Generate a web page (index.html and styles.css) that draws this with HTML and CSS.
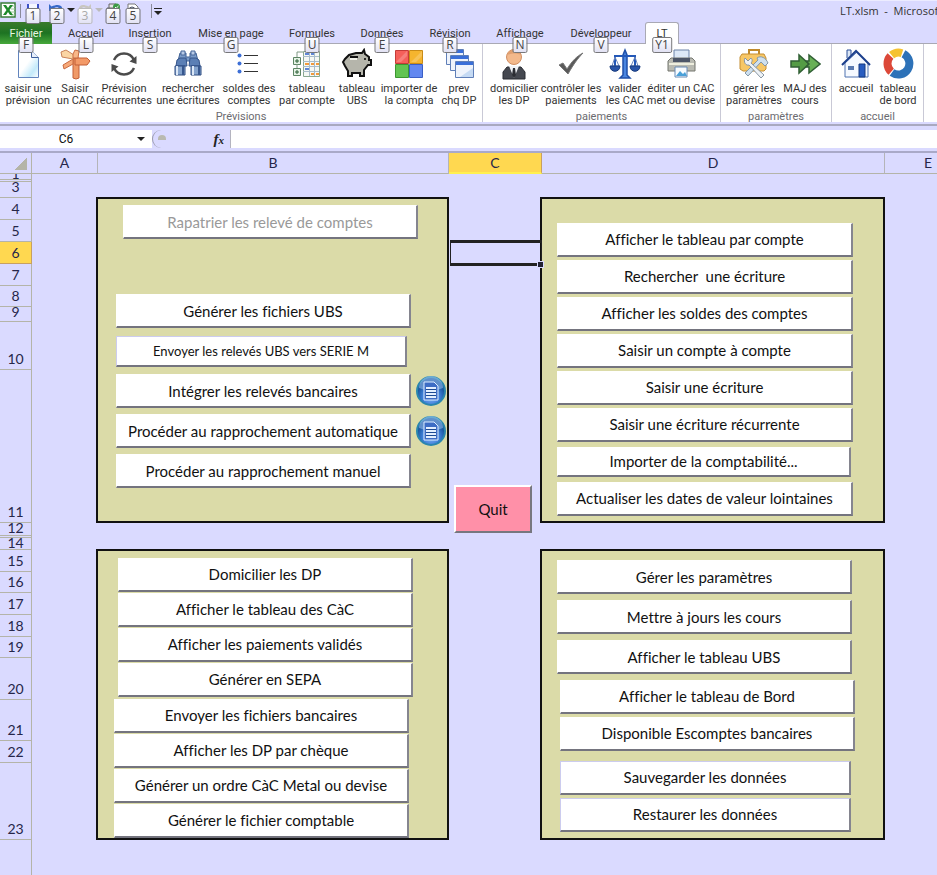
FILE: index.html
```html
<!DOCTYPE html>
<html lang="fr">
<head>
<meta charset="utf-8">
<title>LT.xlsm - Microsoft Excel</title>
<link rel="stylesheet" href="styles.css">
</head>
<body>
<header class="titlebar">
  <svg class="logo" viewBox="0 0 18 18"><rect x="1" y="1" width="14" height="14" fill="#fff" stroke="#3a7d3a" stroke-width="1.5"/><path d="M11 4h4M11 7h4M11 10h4M11 13h4" stroke="#9cc79c"/><path d="M3 3h3l2 3 2-3h3L9.500 8l3.500 5h-3L8 10l-2 3H3l3.500-5z" fill="#1f8a2c"/></svg>
  <span class="bar"></span>
  <button class="qat" aria-label="Enregistrer"><svg viewBox="0 0 16 16"><path d="M2 2h12v12H2z" fill="#3c50c8"/><path d="M4 2h8v6H4z" fill="#f4f6ff"/><path d="M5 11h6v3H5z" fill="#cfd6f5"/></svg><kbd>1</kbd></button>
  <button class="qat" aria-label="Annuler"><svg viewBox="0 0 16 16"><path d="M0 2v7h7L4.500 6.500c4-3 8 0 7 5C16 6 12 0 2.500 4.500z" fill="#3668c8"/></svg><kbd>2</kbd></button>
  <i class="caret"></i>
  <button class="qat" aria-label="Rétablir" disabled><svg viewBox="0 0 16 16"><path d="M14 2v7H7l2.500-2.500c-4-3-6 0-5 5C-1 6 3 0 11.500 4.500z" fill="#c8c6c0"/></svg><kbd>3</kbd></button>
  <i class="caret off"></i>
  <button class="qat tight" aria-label="Impression rapide"><svg viewBox="0 0 16 16"><path d="M4 6V2h7v4M2 6h12v6H2z" fill="#e6e6e6" stroke="#666"/><circle cx="11.500" cy="5" r="3.500" fill="#3d9a45"/><path d="M10 5l1.200 1.200L13.500 4" fill="none" stroke="#fff"/></svg><kbd>4</kbd></button>
  <button class="qat" aria-label="Aperçu"><svg viewBox="0 0 16 16"><path d="M3 2h7l3 3v9H3z" fill="#fff" stroke="#777"/><circle cx="7" cy="8" r="3" fill="#a9d2ec" stroke="#556"/></svg><kbd>5</kbd></button>
  <span class="bar"></span>
  <i class="caret more"></i>
  <span class="doc">LT.xlsm&nbsp; -&nbsp; Microsoft</span>
</header>

<nav class="tabs">
  <button class="tab file">Fichier<kbd>F</kbd></button>
  <button class="tab">Accueil<kbd>L</kbd></button>
  <button class="tab">Insertion<kbd>S</kbd></button>
  <button class="tab">Mise en page<kbd>G</kbd></button>
  <button class="tab">Formules<kbd>U</kbd></button>
  <button class="tab">Données<kbd>E</kbd></button>
  <button class="tab">Révision<kbd>R</kbd></button>
  <button class="tab">Affichage<kbd>N</kbd></button>
  <button class="tab">Développeur<kbd>V</kbd></button>
  <button class="tab active">LT<kbd>Y1</kbd></button>
</nav>

<section class="ribbon">
  <div class="group previsions">
    <div class="tools">
      <button><svg viewBox="0 0 32 32"><defs><linearGradient id="pg" x2="1" y2="1"><stop offset=".45" stop-color="#fff"/><stop offset=".75" stop-color="#c4eafa"/><stop offset="1" stop-color="#fff"/></linearGradient></defs><path d="M6.500 2.500h13l7 7v20h-20z" fill="url(#pg)" stroke="#6284bd"/><path d="M19.500 2.500v7h7" fill="#e8effa" stroke="#3e5f9c"/></svg>saisir une<br>prévision</button>
      <button><svg viewBox="0 0 32 32"><path d="M14 10h6v20l-3 1-3-1z" fill="#f09a68" stroke="#c25f36"/><path d="M14 16L5 21l-1-4 10-6z" fill="#f6a878" stroke="#c96a40"/><path d="M16 10h12l3 3-3 4H16z" fill="#f39a68" stroke="#c25f36"/><path d="M14 11L3 9 2 4l5-2 8 5z" fill="#fbd5a4" stroke="#c9825a"/><path d="M14 6l2-4 4 1-1 7h-5z" fill="#f8b788" stroke="#c96a40"/></svg>Saisir<br>un CAC</button>
      <button><svg viewBox="0 0 32 32"><path d="M6 12A11 11 0 0 1 26 12M26 20A11 11 0 0 1 6 20" fill="none" stroke="#4b4b4b" stroke-width="2.500"/><path d="M28.500 8v8l-7-2.500zM3.500 24v-8l7 2.500z" fill="#4b4b4b"/></svg>Prévision<br>récurrentes</button>
      <button><svg viewBox="0 0 32 32"><path d="M8 5h6v4h4V5h6l2 8H6z" fill="#7a9bc8" stroke="#3d5f93"/><path d="M9 3h4v4H9zM19 3h4v4h-4z" fill="#b7cae6" stroke="#49699b"/><path d="M5 12l3-2h6l1 8H4zM17 18l1-8h6l3 2 1 6z" fill="#5b7fb5" stroke="#34548a"/><path d="M3 18h10v9H3zM19 18h10v9H19z" fill="#84a3cd" stroke="#2c4a80"/><path d="M5 18v9M21 18v9" stroke="#dce8f7" stroke-width="2"/><path d="M11 18v9M27 18v9" stroke="#37578e" stroke-width="2"/></svg>rechercher<br>une écritures</button>
      <button><svg viewBox="0 0 32 32"><g fill="#3d6fd6"><circle cx="6.500" cy="7.500" r="2"/><circle cx="6.500" cy="15.500" r="2"/><circle cx="6.500" cy="23.500" r="2"/></g><path d="M11 7.500h14M11 15.500h14M11 23.500h14" stroke="#333"/></svg>soldes des<br>comptes</button>
      <button><svg viewBox="0 0 32 32"><path d="M12.500 3.500h16v25h-16z" fill="#f5f8f4" stroke="#8aa890"/><path d="M18.500 3v25M23.500 3v25M12 8.500h16M12 13.500h16M12 18.500h16M12 23.500h16" stroke="#a9bccb"/><path d="M14 6h4M20 6h3M14 21h4" stroke="#5f86d6" stroke-width="2"/><path d="M14 16h4M20 16h3M25 16h3M20 26h3M25 26h3" stroke="#f29a3c" stroke-width="2"/><path d="M2.500 9.500h7v7h-7zM2.500 20.500h7v7h-7z" fill="#e6f3e6" stroke="#5d8564"/><path d="M6 11v4M4 13h4M6 22v4M4 24h4" stroke="#2a5f35"/><path d="M6 9V4h6M6 16v4" fill="none" stroke="#809a85"/></svg>tableau<br>par compte</button>
      <button><svg viewBox="0 0 32 32"><path d="M2 14l2-3 4-4 7-2h6l2-3 1 4 4 3v3h2v5h-3l-4 5v6h-4v-3h-8v3H7v-5l-3-5z" fill="#b5b5ab" stroke="#111" stroke-width="2"/><path d="M9 9h8" stroke="#111" stroke-width="2"/><path d="M9 11h7" stroke="#f0f0e8" stroke-width="2"/><circle cx="24" cy="11" r="1"/></svg>tableau<br>UBS</button>
      <button><svg viewBox="0 0 32 32"><path d="M2.500 2.500h13v13h-13z" fill="#f5605a" stroke="#c43c38"/><path d="M16.500 2.500h13v13h-13z" fill="#f5b52e" stroke="#c98b16"/><path d="M2.500 16.500h13v13h-13z" fill="#62c451" stroke="#3c9630"/><path d="M16.500 16.500h13v13h-13z" fill="#6288f0" stroke="#3a5fc6"/><path d="M3 14L14 3v5L8 14zM18 14L29 3v5L23 14z" fill="#fff" opacity=".2"/></svg>importer de<br>la compta</button>
      <button><svg viewBox="0 0 32 32"><g fill="#eef3fb" stroke="#5f7fb8"><path d="M3.500 1.500h17v15h-17z"/><path d="M7.500 7.500h18v15h-18z"/><path d="M12.500 13.500h18v16h-18z"/></g><path d="M4 2h16v3H4zM8 8h17v3H8zM13 14h17v3H13z" fill="#3a6fd8"/><path d="M30 20v9H17z" fill="#c5daf3"/></svg>prev<br>chq DP</button>
    </div>
    <h2>Prévisions</h2>
  </div>
  <div class="group paiements">
    <div class="tools">
      <button><svg viewBox="0 0 32 32"><path d="M5 31v-7l4-5h14l4 5v7z" fill="#454850" stroke="#2b2d33"/><path d="M11 18h10l-5 12z" fill="#f2f4f8"/><path d="M15 20h2l1 7-2 3-2-3z" fill="#2b2d33"/><circle cx="16" cy="9" r="7.500" fill="#f3b98c" stroke="#d08e62"/><path d="M9 7c1-6 11-8 14 0-4-2-9-2-14 0z" fill="#e0a070"/></svg>domicilier<br>les DP</button>
      <button><svg viewBox="0 0 32 32"><path d="M4 17l4-2 4 6C17 13 22 8 28 5c-5 5-10 12-15 21z" fill="#5a5a5a" stroke="#777"/></svg>contrôler les<br>paiements</button>
      <button><svg viewBox="0 0 32 32"><path d="M14 7l2-5 2 5v20l3 3H11l3-3z" fill="#4a86e0" stroke="#1f4fa8" stroke-width="1.500"/><path d="M5 8h22M6 8v10M26 8v10" stroke="#2358b8" stroke-width="2"/><path d="M6 9L3 18h7zM26 9l-4 9h7z" fill="none" stroke="#6c87bd"/><path d="M1 18h10c0 7-10 7-10 0zM21 18h10c0 7-10 7-10 0z" fill="#2a55a8" stroke="#173a7c"/></svg>valider<br>les CAC</button>
      <button><svg viewBox="0 0 32 32"><path d="M9 2h15v12H9z" fill="#dce8f7" stroke="#6a82a8"/><path d="M3 13l3-3h21l3 3v10H3z" fill="#b9bab2" stroke="#74766f"/><path d="M8 10h17v4H8z" fill="#4d5668"/><path d="M4 16h25" stroke="#eeeede" stroke-width="2"/><path d="M10 19h12v10H10z" fill="#f7fbff" stroke="#6789b4"/><path d="M11 28l4-5 3 3 2-2 2 4z" fill="#4aa0d8"/></svg>éditer un CAC<br>met ou devise</button>
    </div>
    <h2>paiements</h2>
  </div>
  <div class="group parametres">
    <div class="tools">
      <button><svg viewBox="0 0 32 32"><path d="M11 6V2h10v4" fill="none" stroke="#c08a2c" stroke-width="2"/><path d="M4 6h22l2 4v11l-2 2H5l-3-2V9z" fill="#f7c766" stroke="#c58e32"/><path d="M19 10c4-3 9 0 11 5l-3 3-4-4-13 14-3-3 13-13z" fill="#cfe0ee" stroke="#8397a8"/><path d="M7 10l3 3 3-3c2 2 1 4 0 5l13 12-3 3L11 17c-3 1-6-3-4-7z" fill="#eef2f6" stroke="#8795a2"/></svg>gérer les<br>paramètres</button>
      <button><svg viewBox="0 0 32 32"><path d="M2 13h8V7l10 9-10 9v-6H2z" fill="#549c45" stroke="#315f35" stroke-width="1.500"/><path d="M17 13h3V7l11 9-11 9v-6h-3l3-3z" fill="#68b056" stroke="#315f35" stroke-width="1.500"/></svg>MAJ des<br>cours</button>
    </div>
    <h2>paramètres</h2>
  </div>
  <div class="group accueil">
    <div class="tools">
      <button><svg viewBox="0 0 32 32"><path d="M5 15L17 4l11 11v14H5z" fill="#f5f9ff" stroke="#4e72b0"/><path d="M7 10V2h4v5" fill="#dbe6f5" stroke="#2a4f98"/><path d="M2 17L16 3l14 14" fill="none" stroke="#1c3f8c" stroke-width="2"/><path d="M8 18h6v4H8z" fill="#5a7ab0"/><path d="M19 16h6v13h-6z" fill="#285cc0" stroke="#173a80"/></svg>accueil<br>&nbsp;</button>
      <button><svg viewBox="0 0 32 32"><g fill="none" stroke-width="8"><path d="M21.500 5.800A11 11 0 1 1 10 24.500" stroke="#2d72b8"/><path d="M9.200 23.800A11 11 0 0 1 8.500 8" stroke="#dc4838"/><path d="M9.600 7.200A11 11 0 0 1 20 5.200" stroke="#f5c231"/></g></svg>tableau<br>de bord</button>
    </div>
    <h2>accueil</h2>
  </div>
</section>

<section class="formulabar">
  <label class="namebox"><input value="C6" aria-label="Zone Nom"><i class="caret"></i></label>
  <div class="fx"><span class="knob"></span><button aria-label="Insérer une fonction">f<small>x</small></button></div>
  <input class="formula" aria-label="Barre de formule">
</section>

<main class="sheet">
  <div class="corner"></div>
  <div class="col">A</div><div class="col">B</div><div class="col selected">C</div><div class="col">D</div><div class="col last">E</div>

  <div class="row cut sliver double">1</div>
  <div class="row cut">3</div>
  <div class="row">4</div>
  <div class="row">5</div>
  <div class="row selected">6</div>
  <div class="row">7</div>
  <div class="row">8</div>
  <div class="row cut">9</div>
  <div class="row">10</div>
  <div class="row">11</div>
  <div class="row cut double">12</div>
  <div class="row cut">14</div>
  <div class="row">15</div>
  <div class="row">16</div>
  <div class="row">17</div>
  <div class="row">18</div>
  <div class="row">19</div>
  <div class="row">20</div>
  <div class="row">21</div>
  <div class="row">22</div>
  <div class="row">23</div>
  <div class="row rest"></div>

  <section class="panel releves">
    <button class="macro lead" disabled>Rapatrier les relevé de comptes</button>
    <div class="stack">
      <div class="slot"><button class="macro">Générer les fichiers UBS</button></div>
      <div class="slot"><button class="macro slim">Envoyer les relevés UBS vers SERIE M</button></div>
      <div class="slot"><button class="macro">Intégrer les relevés bancaires</button>
        <button class="report" aria-label="Rapport d'intégration"><svg viewBox="0 0 30 30"><defs><radialGradient id="orb" cy=".7"><stop offset="0" stop-color="#8ab8f8"/><stop offset=".6" stop-color="#3f7fd8"/><stop offset="1" stop-color="#1b57a0"/></radialGradient></defs><circle cx="15" cy="15" r="14" fill="url(#orb)" stroke="#2a86ae" stroke-width="2"/><path d="M3 12a12 12 0 0 1 24 0c-8 3-16 3-24 0z" fill="#b8d8ff" opacity=".45"/><path d="M8 6h10l4 4v14H8z" fill="#3d6cc4" stroke="#dcebff"/><path d="M10 11h10v11H10z" fill="#e4efff"/><path d="M10 13.500h10M10 16.500h10M10 19.500h10" stroke="#1d4a94"/></svg></button></div>
      <div class="slot"><button class="macro">Procéder au rapprochement automatique</button>
        <button class="report" aria-label="Rapport de rapprochement"><svg viewBox="0 0 30 30"><circle cx="15" cy="15" r="14" fill="url(#orb)" stroke="#2a86ae" stroke-width="2"/><path d="M3 12a12 12 0 0 1 24 0c-8 3-16 3-24 0z" fill="#b8d8ff" opacity=".45"/><path d="M8 6h10l4 4v14H8z" fill="#3d6cc4" stroke="#dcebff"/><path d="M10 11h10v11H10z" fill="#e4efff"/><path d="M10 13.500h10M10 16.500h10M10 19.500h10" stroke="#1d4a94"/></svg></button></div>
      <div class="slot"><button class="macro">Procéder au rapprochement manuel</button></div>
    </div>
  </section>

  <section class="panel ecritures">
    <div class="stack">
      <div class="slot"><button class="macro">Afficher le tableau par compte</button></div>
      <div class="slot"><button class="macro">Rechercher&nbsp; une écriture</button></div>
      <div class="slot"><button class="macro">Afficher les soldes des comptes</button></div>
      <div class="slot"><button class="macro">Saisir un compte à compte</button></div>
      <div class="slot"><button class="macro">Saisir une écriture</button></div>
      <div class="slot"><button class="macro">Saisir une écriture récurrente</button></div>
      <div class="slot"><button class="macro short">Importer de la comptabilité...</button></div>
      <div class="slot"><button class="macro">Actualiser les dates de valeur lointaines</button></div>
    </div>
  </section>

  <div class="cell"></div>
  <button class="quit">Quit</button>

  <section class="panel virements">
    <div class="stack">
      <div class="slot"><button class="macro">Domicilier les DP</button></div>
      <div class="slot"><button class="macro">Afficher le tableau des CàC</button></div>
      <div class="slot"><button class="macro">Afficher les paiements validés</button></div>
      <div class="slot"><button class="macro">Générer en SEPA</button></div>
    </div>
    <div class="stack outdent">
      <div class="slot"><button class="macro">Envoyer les fichiers bancaires</button></div>
      <div class="slot"><button class="macro">Afficher les DP par chèque</button></div>
      <div class="slot"><button class="macro">Générer un ordre CàC Metal ou devise</button></div>
      <div class="slot"><button class="macro">Générer le fichier comptable</button></div>
    </div>
  </section>

  <section class="panel reglages">
    <div class="stack">
      <div class="slot"><button class="macro">Gérer les paramètres</button></div>
      <div class="slot"><button class="macro">Mettre à jours les cours</button></div>
      <div class="slot"><button class="macro">Afficher le tableau UBS</button></div>
    </div>
    <div class="stack indent">
      <div class="slot"><button class="macro">Afficher le tableau de Bord</button></div>
      <div class="slot"><button class="macro">Disponible Escomptes bancaires</button></div>
    </div>
    <div class="stack indent backup">
      <div class="slot"><button class="macro framed">Sauvegarder les données</button></div>
      <div class="slot"><button class="macro framed">Restaurer les données</button></div>
    </div>
  </section>
</main>
</body>
</html>
```

FILE: styles.css
```css
* { box-sizing: border-box; }
body {
  margin: 0;
  min-height: 100vh;
  display: flex;
  flex-direction: column;
  background: #dadaff;
  color: #333;
  font: 11px/13px Roboto, "Open Sans", sans-serif;
  font-variant-ligatures: none;
  overflow-x: hidden;
}
button, input { font: inherit; font-variant-ligatures: none; color: inherit; margin: 0; padding: 0; border: 0; background: none; }
svg { display: block; }

kbd {
  position: absolute;
  z-index: 2;
  left: 50%;
  transform: translateX(-50%);
  min-width: 15px;
  height: 16px;
  padding: 0 2px;
  border: 1px solid #77777a;
  border-radius: 2px;
  background: linear-gradient(#fff, #e2e2f4);
  color: #444;
  font: 12px/14px "Open Sans", sans-serif;
  text-align: center;
}

.caret { width: 0; height: 0; border: 4px solid transparent; border-top-color: #222; border-bottom: 0; }
.caret.off { border-top-color: #bbb; }

/* title bar */
.titlebar { display: flex; height: 22px; padding-top: 1px; align-items: flex-start; border-top: 1px solid #ececff; }
.logo { width: 18px; height: 18px; }
.bar { width: 1px; height: 14px; margin: 2px 4px 0 2px; background: #8a8a9a; }
.qat { position: relative; width: 16px; height: 16px; margin-right: 8px; }
.qat.tight { margin-right: 4px; }
.qat svg { width: 16px; height: 16px; }
.qat kbd { top: 6px; }
.qat:disabled kbd { color: #aaa; border-color: #bbb; }
.titlebar .caret { margin: 6px 2px 0 -6px; }
.titlebar .more { margin: 9px 0 0 -2px; position: relative; }
.more::before { content: ""; position: absolute; left: -4px; top: -7px; width: 8px; height: 1px; background: #222; }
.doc { width: 97px; margin: 2px 0 0 auto; overflow: hidden; white-space: nowrap; font-family: "Open Sans", sans-serif; }

/* tabs */
.tabs { display: grid; grid-template-columns: 52px 68px 60px 102px 60px 80px 56px 84px 78px 44px 1fr; height: 22px; border-bottom: 1px solid #a9a9b4; }
.tab { position: relative; height: 22px; white-space: nowrap; }
.tab kbd { top: 15px; }
.file { background: linear-gradient(#3a7a2c, #1d7322 50%, #46a83a); color: #e9f7e2; }
.active { justify-self: center; width: 34px; background: #fff; border: 1px solid #a9a9b4; border-bottom: 0; border-radius: 3px 3px 0 0; }
.active kbd { top: 14px; }

/* ribbon */
.ribbon { display: flex; height: 80px; background: #fff; border-bottom: 2px solid #dadaff; }
.group { display: flex; flex-direction: column; border-right: 1px solid #c9c9d6; }
.tools { display: grid; padding: 4px 7px 0 4px; }
.previsions .tools { padding: 4px 6px 0 0; grid-template-columns: 56px 38px 60px 68px 54px 62px 38px 66px 34px; }
.paiements .tools { grid-template-columns: 54px 60px 48px 64px; }
.parametres .tools { grid-template-columns: 58px 44px; padding-right: 4px; }
.accueil .tools { grid-template-columns: 40px 44px; padding-right: 3px; }
.tools button { justify-self: center; white-space: nowrap; text-align: center; line-height: 12px; }
.tools svg { width: 32px; height: 32px; margin: 0 auto 3px; }
.group h2 { margin: 3px 0 0; font-size: 11px; line-height: 13px; font-weight: 400; color: #6b6b70; text-align: center; }

/* formula bar */
.formulabar { display: flex; height: 29px; padding: 4px 0 3px; border-top: 2px solid #a9a9c0; border-bottom: 2px solid #a9a9c8; }
.namebox { display: flex; align-items: center; width: 152px; background: #fff; }
.namebox input { width: 132px; margin-right: 5px; text-align: center; color: #111; font-size: 12px; }
.fx { display: flex; justify-content: space-between; width: 79px; padding: 0 6px 0 0; border-left: 1px solid #99a; border-right: 1px solid #b4b4c0; border-radius: 10px 0 0 10px; }
.knob { width: 8px; height: 5px; margin: 5px 0 0 5px; border-radius: 5px 5px 0 0; background: #b9b9b0; }
.fx button { font: italic bold 15px/16px "Liberation Serif", serif; color: #222; }
.fx small { font-size: 11px; }
.formula { flex: 1; min-width: 0; background: #fff; padding: 0 4px; }

/* worksheet grid: row numbers in the first column, floating panels over B and D */
.sheet {
  flex: 1;
  display: grid;
  grid-template-columns: 32px 66px 351px 93px 343px 1fr;
  grid-template-rows: 21px 8px 16px 22px 22px 22px 22px 21px 15px 48px 153px 15px 12px 22px 21px 22px 22px 21px 42px 41px 22px 77px 1fr;
  color: #26264a;
  font: 14px/16px Lato, "Open Sans", sans-serif;
}
.corner { border-right: 1px solid #b4b4a8; border-bottom: 1px solid #b4b4a8; background: linear-gradient(135deg, transparent 50%, #b4b4a8 50%) 15px 5px / 12px 12px no-repeat; }
.col { border-right: 1px solid #b4b4b8; border-bottom: 1px solid #b4b4a8; text-align: center; line-height: 20px; }
.col.last { border-right: 0; padding-left: 34px; }
.row { grid-column: 1; display: flex; align-items: flex-end; justify-content: center; border-right: 1px solid #b4b4a8; border-bottom: 1px solid #b4b4a8; overflow: hidden; line-height: 18px; padding-bottom: 1px; }
.row.cut { align-items: flex-start; padding: 0; line-height: 10px; }
.row.sliver { line-height: 0; }
.row.double { border-bottom: 3px double #b4b4a8; }
.row.rest { border-bottom: 0; }
.selected { background: #ffd850; border-color: #c8a060; }
.col.selected { border-bottom: 2px solid #fff050; }

.panel { display: flex; flex-direction: column; margin: -1px 0 0 -2px; border: 2px solid #111; background: #dbdba8; }
.releves { grid-column: 3; grid-row: 4 / 12; padding: 6px 0 0 18px; }
.ecritures { grid-column: 5; grid-row: 4 / 12; padding: 22px 0 0 15px; }
.virements { grid-column: 3; grid-row: 14 / 23; padding: 6px 0 0 20px; }
.reglages { grid-column: 5; grid-row: 14 / 23; padding: 6px 0 0 15px; }

.stack { display: flex; flex-direction: column; }
.slot { display: flex; align-items: center; height: 37px; }
.releves .slot { height: 40px; gap: 5px; }
.virements .slot { height: 35px; }
.reglages .slot { height: 40px; }
.reglages .indent .slot { height: 37px; }
.outdent { margin: 1px 0 0 -4px; }
.indent { margin: 1px 0 0 3px; }
.indent.backup { margin-top: 7px; }
.lead { margin: 0 0 52px 7px; }

.macro {
  width: 295px;
  height: 34px;
  background: #fff;
  border: 1px solid #fff;
  border-right: 2px solid #85858f;
  border-bottom: 2px solid #74747e;
  color: #111;
  font: 15px/18px Lato, "Open Sans", sans-serif;
  font-variant-ligatures: none;
  white-space: nowrap;
  overflow: hidden;
}
.ecritures .macro { width: 296px; }
.macro:disabled { color: #999; }
.macro.slim { width: 291px; height: 31px; font-size: 13px; border-left-color: #ccccee; border-top-color: #ccccee; }
.ecritures .short { width: 294px; height: 30px; }
.macro.framed { width: 291px; border-left-color: #ccccee; border-top-color: #ccccee; }
.report svg { width: 30px; height: 30px; }

.cell { grid-column: 4; grid-row: 6; margin: -2px 0 -2px 1px; border: solid #222; border-width: 3px 1px; position: relative; }
.cell::after { content: ""; position: absolute; right: -3px; bottom: -5px; width: 5px; height: 5px; background: #223; border: 1px solid #dadaff; }
.quit {
  grid-column: 4;
  grid-row: 11 / 13;
  align-self: end;
  width: 78px;
  height: 48px;
  margin: 0 0 5px 5px;
  border: 2px solid #fff;
  border-right-color: #77777f;
  border-bottom-color: #77777f;
  background: #ff90a8;
  color: #111;
  font: 15px/18px Lato, "Open Sans", sans-serif;
}
```
